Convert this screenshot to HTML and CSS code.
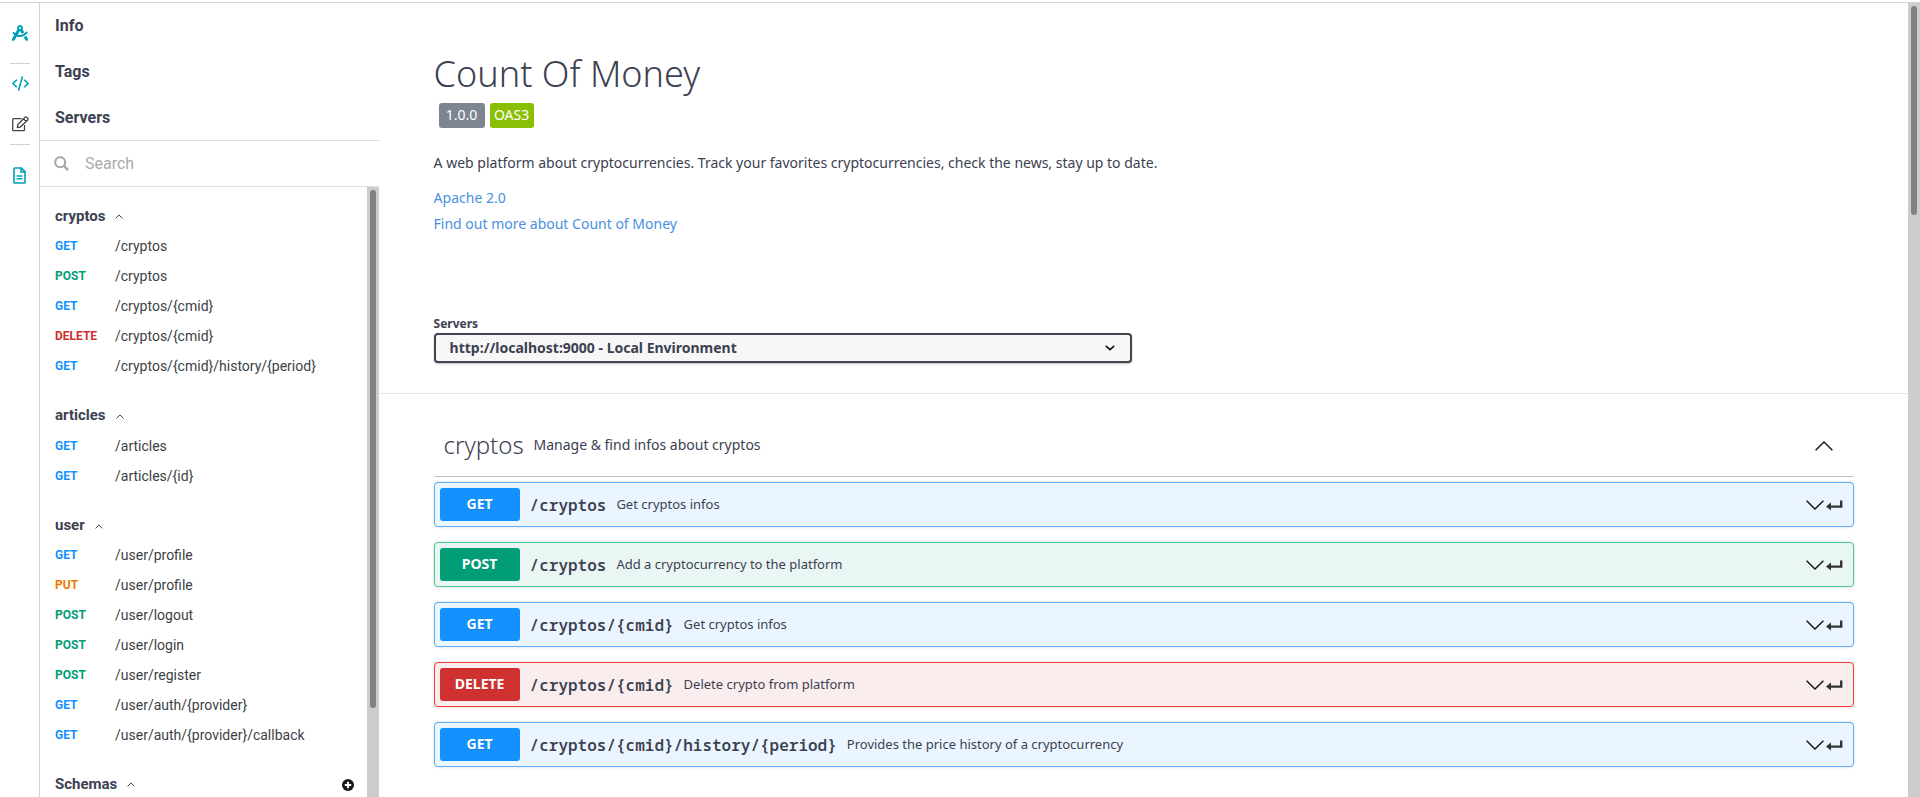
FILE: index.html
```html
<!DOCTYPE html>
<html lang="en">
<head>
<meta charset="utf-8">
<title>Count Of Money</title>
<link rel="stylesheet" href="styles.css">
</head>
<body>
<svg width="0" height="0" class="defs">
  <symbol id="up" viewBox="0 0 8 5"><path d="M.6 4.400 4 .9l3.400 3.500" fill="none" stroke="#3b4151" stroke-width="1"/></symbol>
  <symbol id="down" viewBox="0 0 18 10"><path d="M.6.800 9 9 17.400.800" fill="none" stroke="#111" stroke-width="1.400"/></symbol>
  <symbol id="enter" viewBox="0 0 17 11"><path d="M0 6.400 5 2.600V5.400H14V.5h2.400v7.200H5V10.400z" fill="#333"/></symbol>
</svg>
<div class="app">
  <nav class="rail">
    <svg class="i-compass" width="16" height="16" viewBox="0 0 512 512" fill="#00a0b6"><path d="M457.010 344.420c-25.050 20.330-52.630 37.180-82.540 49.050l54.380 94.190 53.950 23.040c9.810 4.190 20.890-2.210 22.170-12.800l7.020-58.250-54.980-95.230zm42.490-94.560c4.860-7.670 1.890-17.990-6.050-22.390l-28.070-15.570c-7.480-4.150-16.610-1.460-21.260 5.720C403.010 281.150 332.250 320 256 320c-23.930 0-47.230-4.250-69.410-11.530l67.360-116.680c.7.020 1.340.21 2.040.21s1.350-.19 2.040-.21l51.090 88.500c31.230-8.960 59.560-25.750 82.610-48.920l-51.790-89.710C347.390 128.030 352 112.630 352 96c0-53.020-42.980-96-96-96s-96 42.980-96 96c0 16.630 4.610 32.030 12.050 45.660l-68.300 118.310c-12.550-11.610-23.960-24.590-33.680-39-4.790-7.100-13.970-9.620-21.380-5.330l-27.750 16.070c-7.850 4.540-10.630 14.900-5.640 22.470 15.570 23.640 34.690 44.210 55.980 62.020L0 439.660l7.020 58.250c1.280 10.590 12.360 16.990 22.170 12.800l53.950-23.040 70.800-122.630C186.130 377.280 220.620 384 256 384c99.050 0 190.880-51.010 243.500-134.140zM256 64c17.670 0 32 14.330 32 32s-14.330 32-32 32-32-14.330-32-32 14.330-32 32-32z"/></svg>
    <hr>
    <svg class="i-code" width="17" height="15" viewBox="0 0 17 15" fill="none" stroke="#00a0b6" stroke-width="1.600"><path d="M4.800 3.700 1 7.500l3.800 3.800M12.200 3.700 16 7.500l-3.800 3.800M10.500.4 6.500 14.600"/></svg>
    <svg class="i-edit" width="17" height="16" viewBox="0 0 17 16" fill="none" stroke="#444" stroke-width="1.300" stroke-linejoin="round"><path d="M9.500 2.700H1.600A.9.900 0 0 0 .7 3.600v10.200c0 .5.400.9.900.9h10c.5 0 .9-.4.900-.9V9"/><path d="m5.300 11.500.5-3L13 1.300c.5-.5 1.200-.5 1.700 0l1 1c.5.500.5 1.200 0 1.700l-7.300 7-3.100.5zM11.500 2.800l2.700 2.700"/></svg>
    <hr>
    <svg class="i-doc" width="13" height="17" viewBox="0 0 13 17" fill="none" stroke="#00a0b6" stroke-width="1.600"><path d="M1.700 1h6.600l3.700 3.700v10.600a.7.700 0 0 1-.7.700H1.700a.7.700 0 0 1-.7-.7V1.700c0-.4.300-.7.700-.7zM8 1v4h4M3.500 9h6M3.500 11.700h6"/></svg>
  </nav>
  <aside class="side">
    <div class="top">Info</div>
    <div class="top">Tags</div>
    <div class="top">Servers</div>
    <div class="search"><svg width="15" height="15" viewBox="0 0 15 15" fill="none" stroke="#aaa" stroke-width="2.200"><circle cx="6.200" cy="6.200" r="5"/><path d="m9.700 9.700 4.500 4.500" stroke-width="2.600"/></svg><span>Search</span></div>
    <div class="scroller">
      <div class="list">
        <section>
          <h3>cryptos<svg><use href="#up"/></svg></h3>
          <div class="op"><b class="get">GET</b>/cryptos</div>
          <div class="op"><b class="post">POST</b>/cryptos</div>
          <div class="op"><b class="get">GET</b>/cryptos/{cmid}</div>
          <div class="op"><b class="delete">DELETE</b>/cryptos/{cmid}</div>
          <div class="op"><b class="get">GET</b>/cryptos/{cmid}/history/{period}</div>
        </section>
        <section>
          <h3>articles<svg><use href="#up"/></svg></h3>
          <div class="op"><b class="get">GET</b>/articles</div>
          <div class="op"><b class="get">GET</b>/articles/{id}</div>
        </section>
        <section>
          <h3>user<svg><use href="#up"/></svg></h3>
          <div class="op"><b class="get">GET</b>/user/profile</div>
          <div class="op"><b class="put">PUT</b>/user/profile</div>
          <div class="op"><b class="post">POST</b>/user/logout</div>
          <div class="op"><b class="post">POST</b>/user/login</div>
          <div class="op"><b class="post">POST</b>/user/register</div>
          <div class="op"><b class="get">GET</b>/user/auth/{provider}</div>
          <div class="op"><b class="get">GET</b>/user/auth/{provider}/callback</div>
        </section>
        <section>
          <h3 class="schemas">Schemas<svg><use href="#up"/></svg><svg class="add" viewBox="0 0 12 12"><circle cx="6" cy="6" r="6" fill="#1b1b1b"/><path d="M6 2.800v6.400M2.800 6h6.400" stroke="#fff" stroke-width="1.900"/></svg></h3>
        </section>
      </div>
      <div class="bar"><i class="thumb side-thumb"></i></div>
    </div>
  </aside>
  <main>
    <header class="info">
      <h1>Count Of Money</h1>
      <div class="badges"><span class="ver">1.0.0</span><span class="oas">OAS3</span></div>
      <p>A web platform about cryptocurrencies. Track your favorites cryptocurrencies, check the news, stay up to date.</p>
      <a>Apache 2.0</a>
      <a>Find out more about Count of Money</a>
    </header>
    <div class="servers">
      <label>Servers</label>
      <div class="select">http://localhost:9000 - Local Environment<svg width="10" height="6" viewBox="0 0 10 6"><path d="M.8.900 5 4.700 9.200.900" fill="none" stroke="#111" stroke-width="1.600"/></svg></div>
    </div>
    <div class="ops">
      <div class="tag"><h2>cryptos</h2><span>Manage &amp; find infos about cryptos</span><svg class="flip" width="18" height="10"><use href="#down"/></svg></div>
      <div class="block b-get"><b>GET</b><code>/cryptos</code><span>Get cryptos infos</span><svg class="chev"><use href="#down"/></svg><svg class="ent"><use href="#enter"/></svg></div>
      <div class="block b-post"><b>POST</b><code>/cryptos</code><span>Add a cryptocurrency to the platform</span><svg class="chev"><use href="#down"/></svg><svg class="ent"><use href="#enter"/></svg></div>
      <div class="block b-get"><b>GET</b><code>/cryptos/{cmid}</code><span>Get cryptos infos</span><svg class="chev"><use href="#down"/></svg><svg class="ent"><use href="#enter"/></svg></div>
      <div class="block b-delete"><b>DELETE</b><code>/cryptos/{cmid}</code><span>Delete crypto from platform</span><svg class="chev"><use href="#down"/></svg><svg class="ent"><use href="#enter"/></svg></div>
      <div class="block b-get"><b>GET</b><code>/cryptos/{cmid}/history/{period}</code><span>Provides the price history of a cryptocurrency</span><svg class="chev"><use href="#down"/></svg><svg class="ent"><use href="#enter"/></svg></div>
    </div>
  </main>
  <div class="bar"><i class="thumb main-thumb"></i></div>
</div>
</body>
</html>
```
FILE: styles.css
```css
* { box-sizing: border-box; }
body { margin: 0; height: 797px; overflow: hidden; background: #fff; color: #3b4151; font-family: "Noto Sans", sans-serif; }
.defs { display: block; }
svg { flex: none; }
.app { display: flex; height: 795px; margin-top: 2px; border-top: 1px solid #d2d4d4; }

.rail { width: 40px; border-right: 1px solid #d2d4d4; display: flex; flex-direction: column; align-items: flex-start; padding-left: 12px; }
.rail hr { width: 20px; height: 1px; border: 0; margin: 0 0 0 -2px; background: #cfd1d1; }
.i-compass { margin: 22px 0; }
.i-code { margin: 12px 0 25px; }
.i-edit { margin: 0 0 12px; }
.i-doc { margin: 22px 0 0 1px; }

.side { width: 339px; display: flex; flex-direction: column; font-family: Roboto, sans-serif; }
.top { height: 46px; line-height: 47px; padding-left: 15px; font-size: 16px; font-weight: 700; }
.top:first-child { height: 45px; line-height: 46px; }
.search { height: 47px; border: solid #dfe1e1; border-width: 1px 0; display: flex; align-items: center; padding-left: 14px; gap: 16px; font-size: 16px; color: #aaa; }
.scroller { flex: 1; min-height: 0; display: flex; }
.list { flex: 1; padding-top: 14px; overflow: hidden; }
section { margin-bottom: 19.700px; }
h3 { margin: 0; height: 30px; line-height: 30px; padding: 0 13px .6px 15px; font-size: 15px; font-weight: 700; display: flex; align-items: center; }
h3 svg { width: 8px; height: 5px; margin: 2px 0 0 10px; }
.schemas { height: 28px; }
h3 .add { width: 12px; height: 12px; margin: 2px 0 0 auto; }
.op { height: 30px; line-height: 30px; padding-left: 15px; display: flex; font-size: 14px; color: #3d3f45; }
.op b { width: 60px; font-size: 12px; line-height: 31px; }
.get { color: #1391ff; }
.post { color: #009d77; }
.delete { color: #d02f2f; }
.put { color: #ee7a00; }

.bar { width: 12px; flex: none; background: #cdcdcd; padding: 3px; }
.thumb { display: block; width: 6px; border-radius: 3px; background: #7e8282; }
.side-thumb { height: 518px; }
.main-thumb { height: 209px; }

main { flex: 1; }
.info { height: 305px; padding: 46px 54px 0 54.600px; font-size: 14px; }
h1 { margin: 0; font-size: 36px; line-height: 50px; font-weight: 300; }
.badges { display: flex; gap: 5px; padding: 4px 0 0 5px; color: #fff; }
.badges span { height: 25px; line-height: 24px; border-radius: 3px; text-align: center; }
.ver { width: 46px; background: #7d8492; }
.oas { width: 44px; background: #89bf04; }
p { margin: 22px 0 9px; line-height: 26px; }
.info a { display: block; line-height: 26px; color: #4990e2; }
.servers { height: 86px; padding: 7px 54px 0 54.600px; border-bottom: 1px solid #e2e3e3; }
label { display: block; font-size: 12px; font-weight: 700; line-height: 17px; margin-bottom: 1px; }
.select { width: 698px; height: 30px; display: flex; align-items: center; justify-content: space-between; padding: 0 15px 0 14px; border: 2px solid #41444e; border-radius: 4px; background: #f7f7f7; box-shadow: 0 1px 2px rgba(0,0,0,.25); font-size: 14px; font-weight: 700; line-height: 26px; }
.ops { padding: 28px 54px 0 54.600px; }
.tag { height: 55px; display: flex; align-items: center; padding: 0 21px 8px 10px; border-bottom: 1px solid #c1c2c8; font-size: 14px; margin-bottom: 5px; }
.tag span { margin-bottom: 2px; }
h2 { margin: 0 9.800px 0 0; font-size: 24px; font-weight: 300; line-height: 30px; }
.flip { margin: 2px 0 0 auto; transform: rotate(180deg); }
.block { height: 45px; margin-bottom: 15px; border: 1px solid; border-radius: 4px; box-shadow: 0 0 3px rgba(0,0,0,.19); display: flex; align-items: center; padding: 0 10px 0 5px; font-size: 13px; }
.block b { width: 80px; height: 33px; line-height: 32px; border-radius: 3px; text-align: center; color: #fff; font-size: 14px; text-shadow: 0 1px 0 rgba(0,0,0,.1); }
.block code { font: 600 16px/24px "Noto Sans Mono", "DejaVu Sans Mono", monospace; margin: 0 10px 0; }
.block span { line-height: 18px; margin-bottom: 1px; }
.chev { width: 18px; height: 10px; margin-left: auto; }
.ent { width: 17px; height: 11px; margin: 1px 0 0 2px; }
.b-get { background: #ebf5ff; border-color: #61affe; }
.b-get b { background: #1391ff; }
.b-post { background: #e9f6f3; border-color: #49cc90; }
.b-post b { background: #009d77; }
.b-delete { background: #faeded; border-color: #f93e3e; }
.b-delete b { background: #cf3030; }
```
